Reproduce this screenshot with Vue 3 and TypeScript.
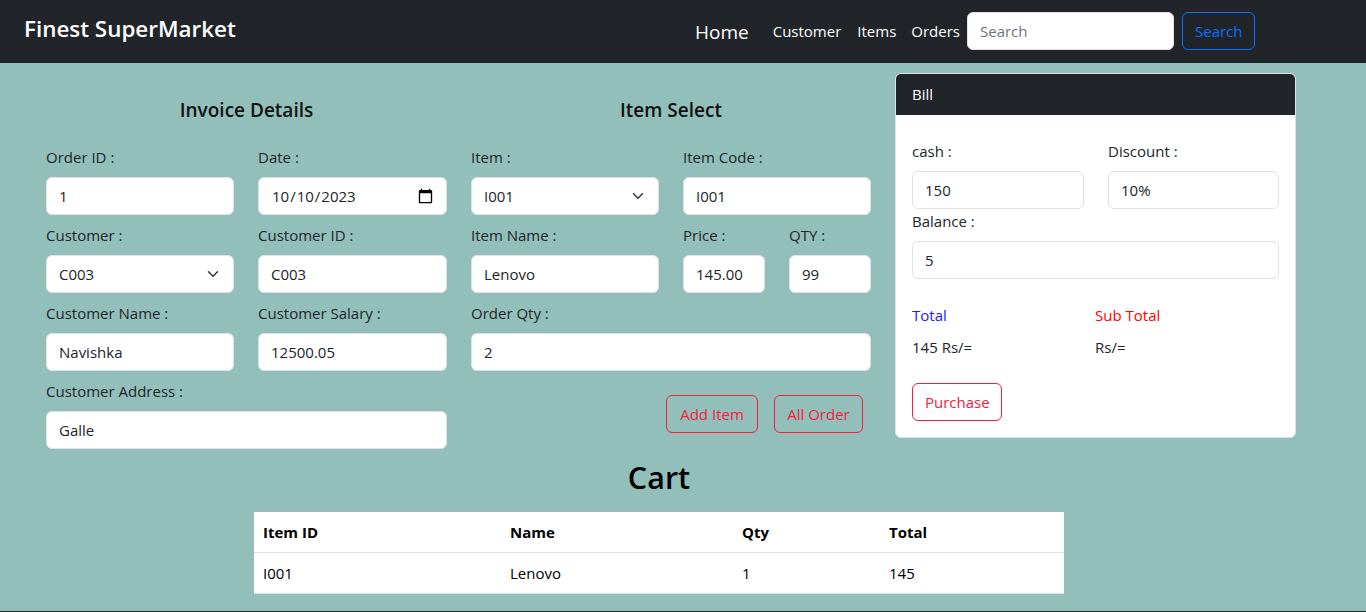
<script setup lang="ts">
const customerItems = ['C001', 'C002', 'C003']
const itemCodes = ['I001', 'I002']
</script>

<template>
  <div class="page">
    <nav class="navbar">
      <span class="brand">Finest SuperMarket</span>
      <div class="nav-right">
        <a class="home">Home</a>
        <a class="link">Customer</a>
        <a class="link items">Items</a>
        <a class="link orders">Orders</a>
        <input class="control search" placeholder="Search" />
        <button class="btn btn-blue">Search</button>
      </div>
    </nav>

    <main class="main">
      <section class="panel">
        <h5 class="title">Invoice Details</h5>
        <div class="grid">
          <div class="field"><label>Order ID :</label><input class="control" value="1" /></div>
          <div class="field"><label>Date :</label><input class="control date" type="date" value="2023-10-10" /></div>
          <div class="field">
            <label>Customer :</label>
            <select class="control select">
              <option v-for="c in customerItems" :key="c" :selected="c === 'C003'">{{ c }}</option>
            </select>
          </div>
          <div class="field"><label>Customer ID :</label><input class="control" value="C003" /></div>
          <div class="field"><label>Customer Name :</label><input class="control" value="Navishka" /></div>
          <div class="field"><label>Customer Salary :</label><input class="control" value="12500.05" /></div>
          <div class="field wide"><label>Customer Address :</label><input class="control" value="Galle" /></div>
        </div>
      </section>

      <section class="panel">
        <h5 class="title">Item Select</h5>
        <div class="grid">
          <div class="field">
            <label>Item :</label>
            <select class="control select">
              <option v-for="i in itemCodes" :key="i">{{ i }}</option>
            </select>
          </div>
          <div class="field"><label>Item Code :</label><input class="control" value="I001" /></div>
          <div class="field"><label>Item Name :</label><input class="control" value="Lenovo" /></div>
          <div class="pair">
            <div class="field"><label>Price :</label><input class="control" value="145.00" /></div>
            <div class="field"><label>QTY :</label><input class="control" value="99" /></div>
          </div>
          <div class="field wide"><label>Order Qty :</label><input class="control" value="2" /></div>
        </div>
        <div class="actions">
          <button class="btn btn-red">Add Item</button>
          <button class="btn btn-red">All Order</button>
        </div>
      </section>

      <aside class="card">
        <header class="card-head">Bill</header>
        <div class="card-body">
          <div class="bill-row">
            <div class="field"><label>cash :</label><input class="control" value="150" /></div>
            <div class="field"><label>Discount :</label><input class="control" value="10%" /></div>
          </div>
          <div class="field balance"><label>Balance :</label><input class="control" value="5" /></div>
          <div class="totals">
            <div>
              <p class="total-blue">Total</p>
              <p>145 Rs/=</p>
            </div>
            <div>
              <p class="total-red">Sub Total</p>
              <p>Rs/=</p>
            </div>
          </div>
          <button class="btn btn-red">Purchase</button>
        </div>
      </aside>
    </main>

    <section class="cart">
      <h1>Cart</h1>
      <table>
        <colgroup>
          <col class="c1" /><col class="c2" /><col class="c3" /><col />
        </colgroup>
        <thead>
          <tr><th>Item ID</th><th>Name</th><th>Qty</th><th>Total</th></tr>
        </thead>
        <tbody>
          <tr><td>I001</td><td>Lenovo</td><td>1</td><td>145</td></tr>
        </tbody>
      </table>
    </section>
  </div>
</template>

<style>
html, body { margin: 0; background: #93bfbb; }
</style>

<style scoped>
.page {
  height: 612px;
  box-sizing: border-box;
  border-bottom: 1px solid #212529;
  overflow: hidden;
  background: #93bfbb;
  font-family: "Open Sans", "Noto Sans", sans-serif;
  font-size: 15px;
  color: #212529;
}
.navbar {
  box-sizing: border-box;
  height: 63px;
  display: flex;
  align-items: center;
  padding: 0 111px 2px 24px;
  background: #212529;
  color: #fff;
}
.brand { font-size: 22.4px; font-weight: 600; margin-bottom: 5px; }
.nav-right { margin-left: auto; display: flex; align-items: center; }
.home { font-size: 19px; margin: 2px 24px 0 0; }
.link { margin: 1px 16px 0 0; }
.items { margin-right: 15px; }
.orders { margin-right: 7px; }
.control {
  box-sizing: border-box;
  display: block;
  width: 100%;
  height: 38px;
  padding: 0 12px;
  border: 1px solid #dee2e6;
  border-radius: 6px;
  background: #fff;
  color: #212529;
  font: inherit;
  outline: none;
}
.control::placeholder { color: #6c757d; }
.date::-webkit-calendar-picker-indicator {
  width: 17px;
  height: 17px;
  padding: 0;
  margin: 0;
}
.select {
  appearance: none;
  background-image: url("data:image/svg+xml,%3csvg xmlns='http://www.w3.org/2000/svg' viewBox='0 0 16 16'%3e%3cpath fill='none' stroke='%23343a40' stroke-linecap='round' stroke-linejoin='round' stroke-width='2' d='m2 5 6 6 6-6'/%3e%3c/svg%3e");
  background-repeat: no-repeat;
  background-position: right 12px center;
  background-size: 16px 12px;
}
.search { width: 207px; margin-right: 8px; }
.btn {
  box-sizing: border-box;
  height: 38px;
  padding: 0 12px;
  border: 1px solid;
  border-radius: 6px;
  background: transparent;
  font: inherit;
}
.btn-blue { width: 73px; color: #0d6efd; border-color: #0d6efd; }
.btn-red { color: #f2203e; border-color: #f2203e; }

.main {
  display: flex;
  align-items: flex-start;
  gap: 24px;
  padding-left: 46px;
}
.panel { width: 401px; flex: none; padding-top: 34px; }
.panel:nth-child(2) { width: 400px; }
.title {
  margin: 0 0 22px;
  height: 26px;
  line-height: 26px;
  text-align: center;
  font-size: 19px;
  font-weight: 600;
  color: #111;
}
.grid {
  display: grid;
  grid-template-columns: 188px 1fr;
  column-gap: 24px;
}
.wide { grid-column: 1 / -1; }
.field { margin-bottom: 8px; min-width: 0; }
.field label {
  display: block;
  height: 24px;
  line-height: 24px;
  margin-bottom: 8px;
}
.pair { display: grid; grid-template-columns: 82px 82px; column-gap: 24px; }
.actions {
  display: flex;
  justify-content: flex-end;
  gap: 16px;
  padding: 16px 8px 0 0;
}
.actions .btn:first-child { width: 92px; }
.actions .btn:last-child { width: 89px; }

.card {
  box-sizing: border-box;
  width: 401px;
  height: 365px;
  margin-top: 10px;
  flex: none;
  border: 1px solid #dee2e6;
  border-radius: 6px;
  background: #fff;
  overflow: hidden;
}
.card-head {
  height: 41px;
  line-height: 41px;
  padding: 0 16px;
  background: #212529;
  color: #fff;
}
.card-body { padding: 24px 16px 0; }
.bill-row { display: grid; grid-template-columns: 172px 171px; column-gap: 24px; }
.bill-row .field { margin-bottom: 0; }
.balance { margin: 0; }
.totals {
  display: grid;
  grid-template-columns: 183px 1fr;
  padding-top: 24px;
  margin-bottom: 16px;
}
.totals p { margin: 0 0 8px; height: 24px; line-height: 24px; }
.total-blue { color: #1a1aff; }
.total-red { color: #f00; }
.card-body > .btn { width: 90px; }

.cart { width: 810px; margin-left: 254px; margin-top: 2px; }
.cart h1 {
  margin: 0 0 15px;
  height: 38px;
  line-height: 36px;
  text-align: center;
  font-size: 30.5px;
  font-weight: 600;
  color: #000;
}
table {
  width: 810px;
  table-layout: fixed;
  border-collapse: collapse;
  background: #fff;
  color: #000;
}
.c1 { width: 247px; }
.c2 { width: 232px; }
.c3 { width: 147px; }
th, td {
  height: 40px;
  padding: 0 9px;
  text-align: left;
  border-bottom: 1px solid #dee2e6;
}
th { font-weight: 700; }
</style>
